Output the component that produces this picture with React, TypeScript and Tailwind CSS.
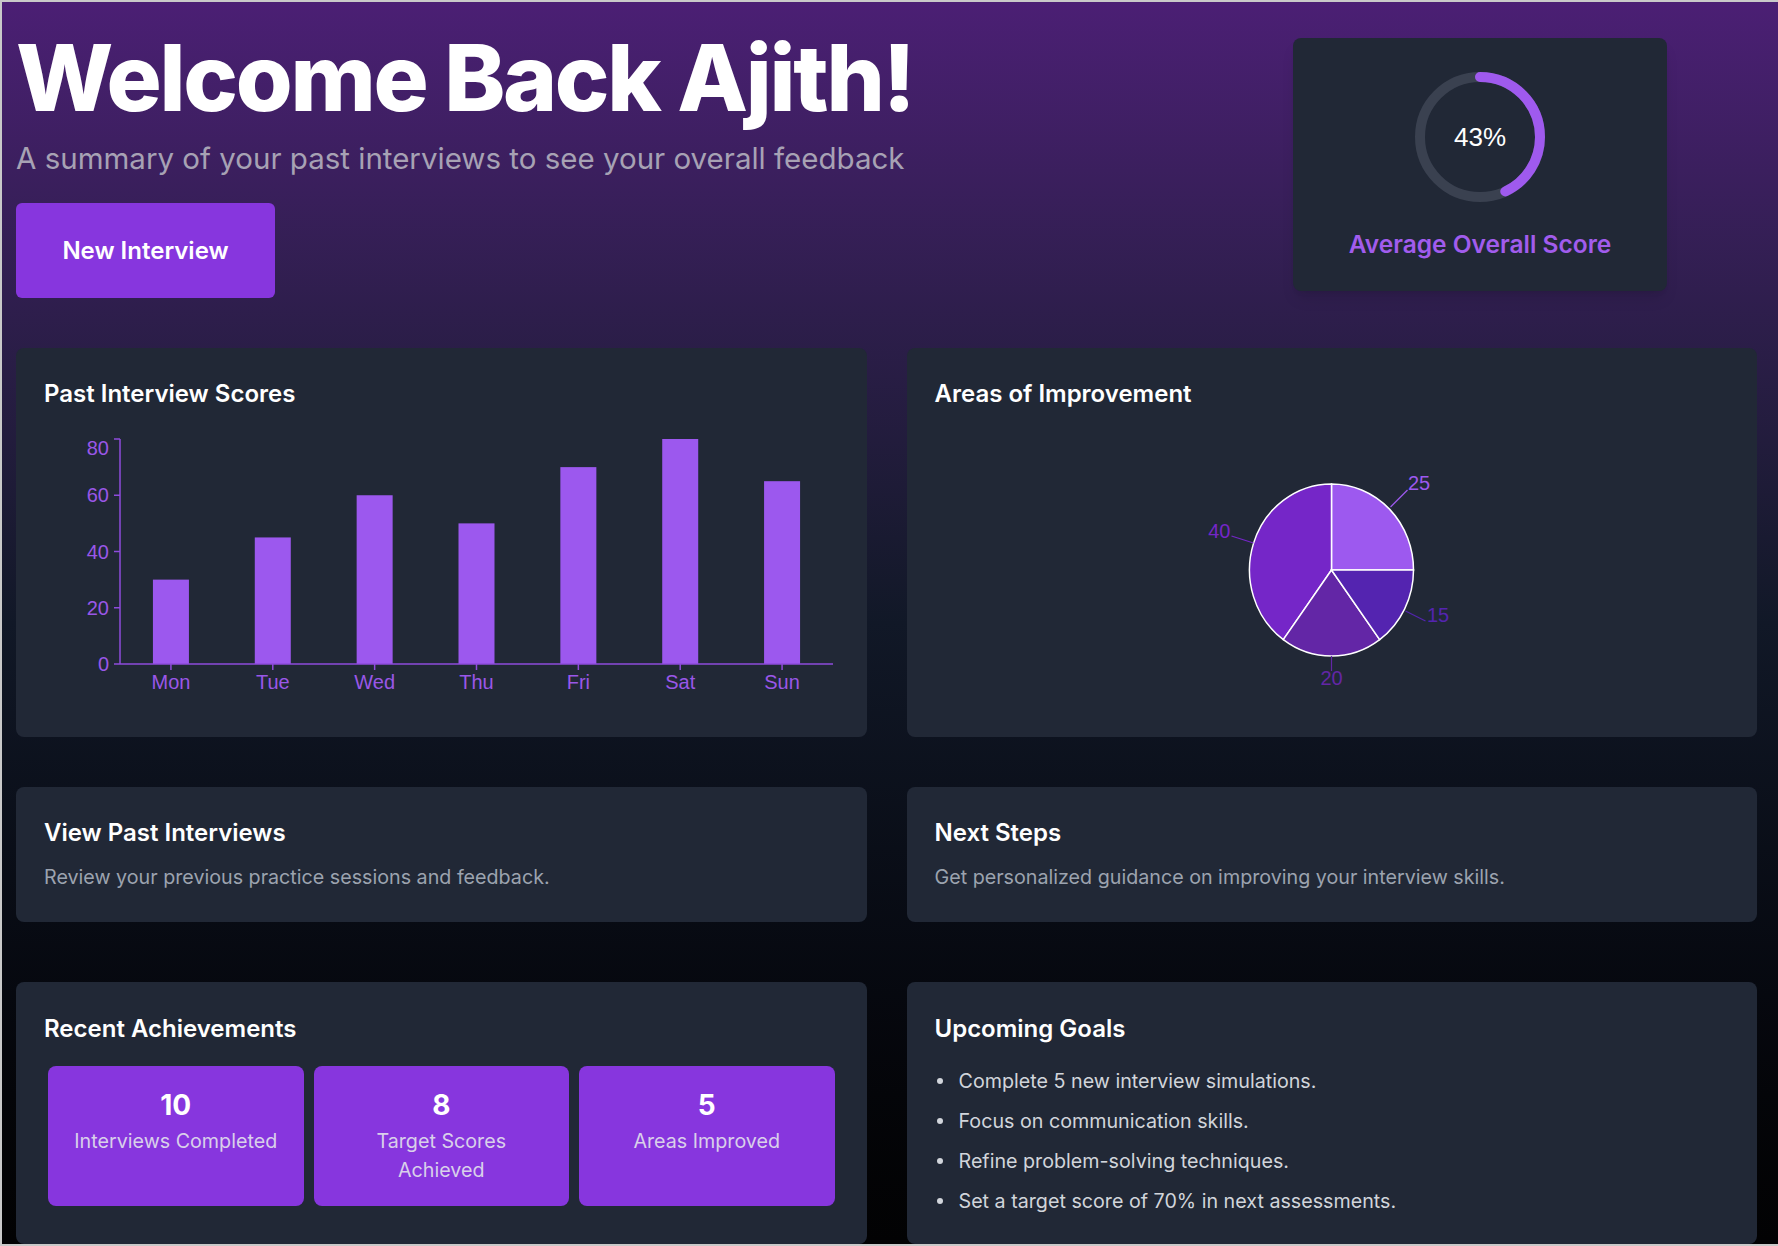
import React from "react";

const bars: [string, number][] = [
  ["Mon", 30],
  ["Tue", 45],
  ["Wed", 60],
  ["Thu", 50],
  ["Fri", 70],
  ["Sat", 80],
  ["Sun", 65],
];

function BarChart() {
  const x0 = 76;
  const xEnd = 789;
  const yTop = 29;
  const yBot = 254;
  const k = (yBot - yTop) / 80;
  const band = (xEnd - x0) / 7;
  const axis = "#8e4bdc";
  const label = "#9a57e8";
  return (
    <svg width="794" height="300" viewBox="0 0 794 300" className="block">
      {bars.map(([d, v], i) => {
        const cx = x0 + band * (i + 0.5);
        const h = v * k;
        return (
          <g key={d}>
            <rect x={cx - 18} y={yBot - h} width={36} height={h} fill="#9c58ee" />
            <line x1={cx} x2={cx} y1={yBot} y2={yBot + 6} stroke={axis} strokeWidth={1.5} />
            <text x={cx} y={279} textAnchor="middle" fill={label} fontSize={20} fontFamily="'Liberation Sans', Arial, sans-serif">
              {d}
            </text>
          </g>
        );
      })}
      {[0, 20, 40, 60, 80].map((v) => {
        const y = yBot - v * k;
        const ly = v === 80 ? y + 9 : y;
        return (
          <g key={v}>
            <line x1={x0 - 6} x2={x0} y1={y} y2={y} stroke={axis} strokeWidth={1.5} />
            <text x={x0 - 11} y={ly + 7} textAnchor="end" fill={label} fontSize={20} fontFamily="'Liberation Sans', Arial, sans-serif">
              {v}
            </text>
          </g>
        );
      })}
      <line x1={x0} x2={x0} y1={yTop} y2={yBot} stroke={axis} strokeWidth={1.5} />
      <line x1={x0} x2={xEnd} y1={yBot} y2={yBot} stroke={axis} strokeWidth={1.5} />
    </svg>
  );
}

function PieChart() {
  const cx = 396.5;
  const cy = 160;
  const r = 82;
  const sy = 1.05;
  const slices: { v: number; a1: number; a2: number; c: string }[] = [
    { v: 25, a1: 0, a2: 90, c: "#9d59ef" },
    { v: 40, a1: 90, a2: 234, c: "#7526c8" },
    { v: 20, a1: 234, a2: 306, c: "#6326a6" },
    { v: 15, a1: 306, a2: 360, c: "#5424b0" },
  ];
  const p = (a: number) => {
    const rad = (a * Math.PI) / 180;
    return [r * Math.cos(rad), -r * Math.sin(rad)];
  };
  const font = "'Liberation Sans', Arial, sans-serif";
  return (
    <svg width="794" height="300" viewBox="0 0 794 300" className="block">
      <g transform={`translate(${cx} ${cy}) scale(1 ${sy})`}>
        {slices.map((s) => {
          const [x1, y1] = p(s.a1);
          const [x2, y2] = p(s.a2);
          const large = s.a2 - s.a1 > 180 ? 1 : 0;
          return (
            <path
              key={s.v}
              d={`M 0 0 L ${x1} ${y1} A ${r} ${r} 0 ${large} 0 ${x2} ${y2} Z`}
              fill={s.c}
              stroke="#ffffff"
              strokeWidth={1.5}
              vectorEffect="non-scaling-stroke"
            />
          );
        })}
      </g>
      <line x1={455.5} y1={97} x2={472.5} y2={80} stroke="#9d59ef" strokeWidth={1.2} />
      <text x={473} y={80} fill="#9d59ef" fontSize={20} fontFamily={font}>25</text>
      <line x1={470.5} y1={201} x2={490.5} y2={211} stroke="#5424b0" strokeWidth={1.2} />
      <text x={492} y={212} fill="#5424b0" fontSize={20} fontFamily={font}>15</text>
      <line x1={396.5} y1={246} x2={396.5} y2={261} stroke="#6326a6" strokeWidth={1.2} />
      <text x={396.5} y={275} textAnchor="middle" fill="#6326a6" fontSize={20} fontFamily={font}>20</text>
      <line x1={318.5} y1={133} x2={296.5} y2={126} stroke="#7526c8" strokeWidth={1.2} />
      <text x={295.5} y={128} textAnchor="end" fill="#7526c8" fontSize={20} fontFamily={font}>40</text>
    </svg>
  );
}

function ScoreRing() {
  const r = 60;
  const c = 2 * Math.PI * r;
  return (
    <div className="relative w-[130px] h-[130px]">
      <svg width="130" height="130" viewBox="0 0 130 130" className="block">
        <circle cx="65" cy="65" r={r} fill="none" stroke="#3a4150" strokeWidth={10} />
        <circle
          cx="65"
          cy="65"
          r={r}
          fill="none"
          stroke="#9f5aee"
          strokeWidth={10}
          strokeLinecap="round"
          strokeDasharray={`${c * 0.43} ${c}`}
          transform="rotate(-90 65 65)"
        />
      </svg>
      <div className="absolute inset-0 flex items-center justify-center text-[26px] text-white [font-family:'Liberation_Sans',Arial,sans-serif]">
        43%
      </div>
    </div>
  );
}

function Card({ children, className = "" }: { children: React.ReactNode; className?: string }) {
  return <div className={`rounded-lg bg-[#212836] px-7 py-[30px] ${className}`}>{children}</div>;
}

function CardTitle({ children }: { children: React.ReactNode }) {
  return <h2 className="text-2xl leading-8 font-semibold text-white">{children}</h2>;
}

const goals = [
  "Complete 5 new interview simulations.",
  "Focus on communication skills.",
  "Refine problem-solving techniques.",
  "Set a target score of 70% in next assessments.",
];

export default function App() {
  return (
    <div className="w-[1778px] h-[1246px] overflow-hidden border-t-2 border-l-2 border-b-2 border-[#c9c9c9] bg-linear-to-b from-[#4b1f74] via-[#111827] via-50% to-[#020203] [font-family:Inter,sans-serif]">
      <div className="pl-[14px] pr-[21px] pt-[30px]">
        <header className="flex justify-between items-start">
          <div>
            <h1 className="text-[92px] leading-none font-extrabold text-white tracking-[-0.025em]">
              Welcome Back Ajith!
            </h1>
            <p className="mt-[16px] text-[29.5px] leading-9 text-[#a7a2b4]">
              A summary of your past interviews to see your overall feedback
            </p>
            <button className="mt-[27px] w-[259px] h-[95px] rounded-md bg-[#8736de] text-white text-2xl font-semibold">
              New Interview
            </button>
          </div>
          <div className="mt-[6px] mr-[90px] w-[374px] h-[253px] rounded-lg bg-[#212836] shadow-lg flex flex-col items-center pt-[34px]">
            <ScoreRing />
            <div className="mt-[26px] text-[24.5px] leading-8 font-semibold text-[#a15ced]">Average Overall Score</div>
          </div>
        </header>

        <div className="mt-[50px] grid grid-cols-2 gap-10">
          <Card className="h-[389px]">
            <CardTitle>Past Interview Scores</CardTitle>
            <BarChart />
          </Card>
          <Card className="h-[389px]">
            <CardTitle>Areas of Improvement</CardTitle>
            <PieChart />
          </Card>
        </div>

        <div className="mt-[50px] grid grid-cols-2 gap-10">
          <Card className="h-[135px]">
            <CardTitle>View Past Interviews</CardTitle>
            <p className="mt-[14px] text-[19.7px] leading-7 text-[#9ca3af]">Review your previous practice sessions and feedback.</p>
          </Card>
          <Card className="h-[135px]">
            <CardTitle>Next Steps</CardTitle>
            <p className="mt-[14px] text-[19.7px] leading-7 text-[#9ca3af]">
              Get personalized guidance on improving your interview skills.
            </p>
          </Card>
        </div>

        <div className="mt-[60px] grid grid-cols-2 gap-10">
          <Card className="h-[262px] pt-[31px]">
            <CardTitle>Recent Achievements</CardTitle>
            <div className="mt-[21px] px-1 grid grid-cols-3 gap-[10px]">
              {[
                ["10", "Interviews Completed"],
                ["8", "Target Scores Achieved"],
                ["5", "Areas Improved"],
              ].map(([n, l]) => (
                <div key={n} className="h-[140px] rounded-lg bg-[#8736de] pt-[21px] px-6 text-center">
                  <div className="text-[28px] leading-9 font-bold text-white">{n}</div>
                  <div className="mt-1 text-[19.7px] leading-[29px] text-[#d9d0ea]">{l}</div>
                </div>
              ))}
            </div>
          </Card>
          <Card className="h-[262px] pt-[31px]">
            <CardTitle>Upcoming Goals</CardTitle>
            <ul className="mt-[22px] space-y-3 text-[19.7px] leading-7 text-[#d1d5db]">
              {goals.map((g) => (
                <li key={g} className="flex items-center">
                  <span className="ml-[2px] w-[6px] h-[6px] rounded-full bg-[#d1d5db] shrink-0" />
                  <span className="ml-[16px]">{g}</span>
                </li>
              ))}
            </ul>
          </Card>
        </div>
      </div>
    </div>
  );
}
